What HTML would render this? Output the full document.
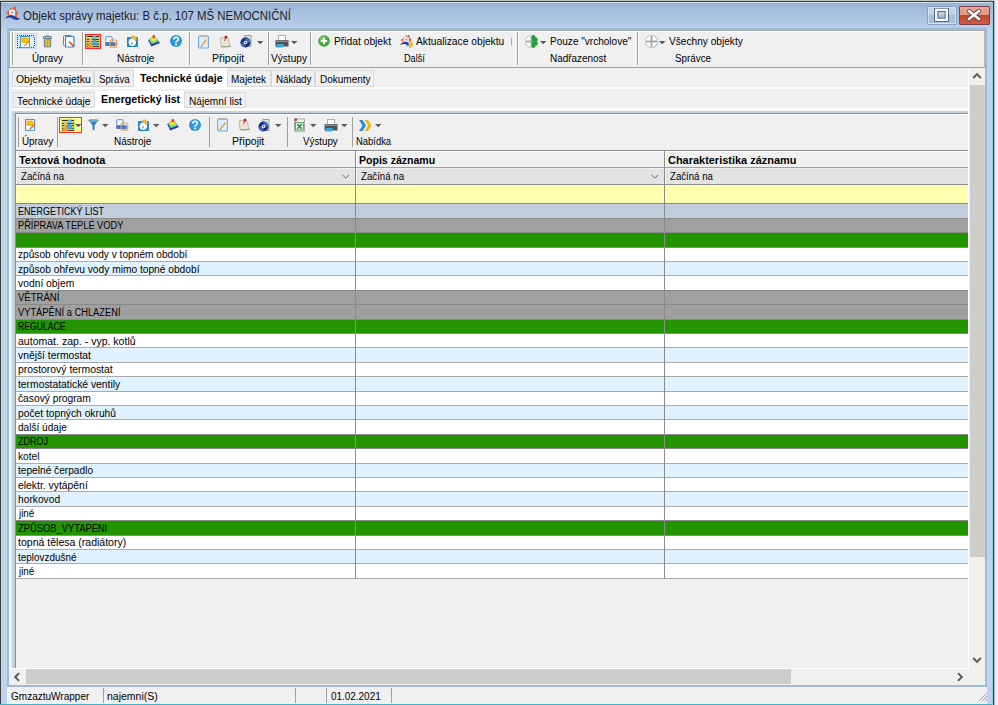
<!DOCTYPE html>
<html><head><meta charset="utf-8">
<style>
html,body{margin:0;padding:0;}
body{width:998px;height:705px;position:relative;overflow:hidden;background:#f0f0f0;font-family:"Liberation Sans", sans-serif;}
div{position:absolute;}
.t{white-space:pre;line-height:normal;}
</style></head><body>
<div style="left:0px;top:0px;width:998px;height:705px;background:#f0f0f0"></div>
<div style="left:0px;top:0px;width:995px;height:1px;background:#c4c4c4"></div>
<div style="left:0px;top:1px;width:994px;height:704px;background:#3a4048"></div>
<div style="left:994px;top:1px;width:1px;height:704px;background:#b4b8bc"></div>
<div style="left:1px;top:2px;width:992px;height:703px;background:#bdd4ec"></div>
<div style="left:1px;top:2px;width:992px;height:26px;background:linear-gradient(#98b3d3,#b9d0ea)"></div>
<div style="left:2px;top:2px;width:990px;height:1px;background:#d4e2f0"></div>
<div style="left:7px;top:28px;width:980px;height:659px;background:#9fb9d6"></div>
<div style="left:9px;top:30px;width:976px;height:655px;background:#f0f0f0"></div>
<div style="left:7px;top:687px;width:980px;height:17px;background:#f0f0f0"></div>
<div style="left:0px;top:704px;width:993px;height:1px;background:#3fb2c6"></div>
<div style="left:992px;top:5px;width:1px;height:700px;background:#8ccde4"></div>
<svg style="position:absolute;left:0px;top:0px" width="24" height="24" viewBox="0 0 24 24">
<path d="M5.3 13.6 L12.4 7.6 L14 8.8 L14 6.8 L16 6.8 L16 10.6 L19 13.6 L17.2 13.6 L17 18 L15 18 L15 10.3 L12.2 9.9 L9.3 10.4 L9 15.5 L7.8 15.5 L7.8 13.6Z" fill="#e45a2a"/>
<path d="M9.2 10.2 L12.3 8.9 L15.2 10.2 L15.2 16 L9.2 16Z" fill="#e6e2ea"/>
<circle cx="12.2" cy="12.4" r="0.8" fill="#7a7a90"/>
<path d="M5.4 18 Q8 15 11 15.1 Q14 15.3 16.5 17.4 Q18 18.2 19.8 17.9 L19.2 19.2 Q17 20.4 14.5 19.6 Q12.5 18 10 17.6 Q7.5 17.5 5.8 18.6Z" fill="#1e3ea0"/>
<path d="M11 18 Q13 18.6 14.6 20.2 L12.6 20.1Z" fill="#50b8c0"/></svg>
<div class="t" style="left:23.40px;top:8.74px;font-size:12px;color:#1e1e28;transform:scaleX(0.9522);transform-origin:0 0;">Objekt správy majetku: B č.p. 107 MŠ NEMOCNIČNÍ</div>
<div style="left:926.5px;top:6px;width:30.5px;height:18.5px;background:linear-gradient(#c6d8ec 0%,#bcd0e8 45%,#a6bdd8 50%,#aac2dc 100%);border:1px solid #8aa2be;box-shadow:inset 0 0 0 1px #d0e0f2;box-sizing:border-box;border-radius:1px"></div>
<svg style="position:absolute;left:934px;top:8px" width="16" height="15" viewBox="0 0 16 15"><rect x="2.2" y="1.8" width="10.6" height="10" fill="none" stroke="#4a5a70" stroke-width="4.2"/><rect x="2.2" y="1.8" width="10.6" height="10" fill="none" stroke="#fafafa" stroke-width="2.4"/></svg>
<div style="left:959px;top:6px;width:31px;height:18.5px;background:linear-gradient(#eba898 0%,#e4927e 45%,#c4462a 50%,#cf5c42 100%);border:1px solid #80404a;box-sizing:border-box;border-radius:1px"></div>
<svg style="position:absolute;left:964px;top:7px" width="20" height="16" viewBox="0 0 20 16"><path d="M5 4 L15 12 M15 4 L5 12" stroke="#5a4048" stroke-width="4.4" stroke-linecap="round"/><path d="M5 4 L15 12 M15 4 L5 12" stroke="#f6f6f6" stroke-width="2.8" stroke-linecap="round"/></svg>
<div style="left:9px;top:30px;width:976px;height:37px;background:#f0f0f0"></div>
<div style="left:9px;top:30px;width:976px;height:1px;background:#a4abb3"></div>
<div style="left:9px;top:30px;width:1px;height:38px;background:#a4abb3"></div>
<div style="left:10px;top:31px;width:974px;height:1px;background:#fff"></div>
<div style="left:10px;top:31px;width:1px;height:36px;background:#fff"></div>
<div style="left:9px;top:67px;width:976px;height:1px;background:#a0a0a0"></div>
<div style="left:984px;top:30px;width:1px;height:38px;background:#b8b8b8"></div>
<div style="left:9px;top:68px;width:1px;height:600px;background:#fafafa"></div>
<div style="left:12px;top:32px;width:1px;height:33px;background:#a0a0a0"></div>
<div style="left:13px;top:32px;width:1px;height:33px;background:#fafafa"></div>
<div style="left:82px;top:32px;width:1px;height:33px;background:#a0a0a0"></div>
<div style="left:83px;top:32px;width:1px;height:33px;background:#fafafa"></div>
<div style="left:189px;top:32px;width:1px;height:33px;background:#a0a0a0"></div>
<div style="left:190px;top:32px;width:1px;height:33px;background:#fafafa"></div>
<div style="left:268px;top:32px;width:1px;height:33px;background:#a0a0a0"></div>
<div style="left:269px;top:32px;width:1px;height:33px;background:#fafafa"></div>
<div style="left:310px;top:32px;width:1px;height:33px;background:#a0a0a0"></div>
<div style="left:311px;top:32px;width:1px;height:33px;background:#fafafa"></div>
<div style="left:517px;top:32px;width:1px;height:33px;background:#a0a0a0"></div>
<div style="left:518px;top:32px;width:1px;height:33px;background:#fafafa"></div>
<div style="left:637px;top:32px;width:1px;height:33px;background:#a0a0a0"></div>
<div style="left:638px;top:32px;width:1px;height:33px;background:#fafafa"></div>
<div style="left:511px;top:38px;width:1px;height:8px;background:#b0b0b0"></div>
<div class="t" style="left:32.00px;top:52.75px;font-size:10px;color:#000;transform:scaleX(0.9787);transform-origin:0 0;">Úpravy</div>
<div class="t" style="left:116.80px;top:52.75px;font-size:10px;color:#000;transform:scaleX(1.0060);transform-origin:0 0;">Nástroje</div>
<div class="t" style="left:212.40px;top:52.75px;font-size:10px;color:#000;transform:scaleX(1.0524);transform-origin:0 0;">Připojit</div>
<div class="t" style="left:271.00px;top:52.75px;font-size:10px;color:#000;transform:scaleX(1.0121);transform-origin:0 0;">Výstupy</div>
<div class="t" style="left:404.00px;top:52.75px;font-size:10px;color:#000;transform:scaleX(0.9128);transform-origin:0 0;">Další</div>
<div class="t" style="left:549.50px;top:52.75px;font-size:10px;color:#000;transform:scaleX(0.9926);transform-origin:0 0;">Nadřazenost</div>
<div class="t" style="left:675.00px;top:52.75px;font-size:10px;color:#000;transform:scaleX(0.9832);transform-origin:0 0;">Správce</div>
<div class="t" style="left:333.50px;top:36.25px;font-size:10px;color:#000;transform:scaleX(1.0267);transform-origin:0 0;">Přidat objekt</div>
<div class="t" style="left:415.50px;top:36.25px;font-size:10px;color:#000;transform:scaleX(1.0245);transform-origin:0 0;">Aktualizace objektu</div>
<div class="t" style="left:549.50px;top:36.25px;font-size:10px;color:#000;transform:scaleX(1.0039);transform-origin:0 0;">Pouze "vrcholove"</div>
<div class="t" style="left:669.00px;top:36.25px;font-size:10px;color:#000;transform:scaleX(1.0135);transform-origin:0 0;">Všechny objekty</div>
<div style="left:9px;top:68px;width:960px;height:20px;background:#f0f0f0"></div>
<div style="left:12px;top:87px;width:957px;height:2px;background:#fff"></div>
<div style="left:11.5px;top:70px;width:82.5px;height:17px;background:#f0f0f0;border:1px solid #dadada;box-sizing:border-box"></div>
<div class="t" style="left:15.50px;top:73.95px;font-size:10px;color:#000;transform:scaleX(1.0431);transform-origin:0 0;">Objekty majetku</div>
<div style="left:93.5px;top:70px;width:40.5px;height:17px;background:#f0f0f0;border:1px solid #dadada;box-sizing:border-box"></div>
<div class="t" style="left:99.00px;top:73.95px;font-size:10px;color:#000;transform:scaleX(0.9650);transform-origin:0 0;">Správa</div>
<div style="left:226.5px;top:70px;width:44.5px;height:17px;background:#f0f0f0;border:1px solid #dadada;box-sizing:border-box"></div>
<div class="t" style="left:231.00px;top:73.95px;font-size:10px;color:#000;transform:scaleX(0.9996);transform-origin:0 0;">Majetek</div>
<div style="left:270.5px;top:70px;width:44.5px;height:17px;background:#f0f0f0;border:1px solid #dadada;box-sizing:border-box"></div>
<div class="t" style="left:275.50px;top:73.95px;font-size:10px;color:#000;transform:scaleX(0.9826);transform-origin:0 0;">Náklady</div>
<div style="left:314.5px;top:70px;width:59.0px;height:17px;background:#f0f0f0;border:1px solid #dadada;box-sizing:border-box"></div>
<div class="t" style="left:319.50px;top:73.95px;font-size:10px;color:#000;transform:scaleX(0.9985);transform-origin:0 0;">Dokumenty</div>
<div style="left:134px;top:68px;width:92.5px;height:21px;background:#fff"></div>
<div class="t" style="left:139.50px;top:71.75px;font-size:11px;font-weight:bold;color:#000;transform:scaleX(0.9746);transform-origin:0 0;">Technické údaje</div>
<div style="left:12.5px;top:91.5px;width:82.5px;height:16.5px;background:#f0f0f0;border:1px solid #dadada;box-sizing:border-box"></div>
<div class="t" style="left:17.40px;top:95.65px;font-size:10px;color:#000;transform:scaleX(1.0256);transform-origin:0 0;">Technické údaje</div>
<div style="left:184px;top:91.5px;width:61.5px;height:16.5px;background:#f0f0f0;border:1px solid #dadada;box-sizing:border-box"></div>
<div class="t" style="left:189.00px;top:95.65px;font-size:10px;color:#000;transform:scaleX(1.0103);transform-origin:0 0;">Nájemní list</div>
<div style="left:12px;top:108px;width:957px;height:3px;background:#fff"></div>
<div style="left:95px;top:90.5px;width:89px;height:19.5px;background:#fff"></div>
<div class="t" style="left:100.50px;top:93.05px;font-size:11px;font-weight:bold;color:#000;transform:scaleX(0.9737);transform-origin:0 0;">Energetický list</div>
<div style="left:12px;top:111px;width:957px;height:557px;background:#c3d1de"></div>
<div style="left:15px;top:113px;width:954px;height:555px;background:#f0f0f0"></div>
<div style="left:15px;top:113px;width:954px;height:1px;background:#8c8c8c"></div>
<div style="left:15px;top:113px;width:1px;height:555px;background:#8c8c8c"></div>
<div style="left:968px;top:578px;width:1px;height:90px;background:#fff"></div>
<div style="left:16px;top:114px;width:953px;height:36px;background:#f0f0f0"></div>
<div style="left:16px;top:114px;width:953px;height:1px;background:#fff"></div>
<div style="left:17.5px;top:117px;width:1px;height:30px;background:#a0a0a0"></div>
<div style="left:56.6px;top:117px;width:1px;height:30px;background:#a0a0a0"></div>
<div style="left:208.8px;top:117px;width:1px;height:30px;background:#a0a0a0"></div>
<div style="left:287.2px;top:117px;width:1px;height:30px;background:#a0a0a0"></div>
<div style="left:352px;top:117px;width:1px;height:30px;background:#a0a0a0"></div>
<div class="t" style="left:21.60px;top:135.95px;font-size:10px;color:#000;transform:scaleX(0.9819);transform-origin:0 0;">Úpravy</div>
<div class="t" style="left:113.60px;top:135.95px;font-size:10px;color:#000;transform:scaleX(1.0007);transform-origin:0 0;">Nástroje</div>
<div class="t" style="left:231.60px;top:135.95px;font-size:10px;color:#000;transform:scaleX(1.0556);transform-origin:0 0;">Připojit</div>
<div class="t" style="left:302.60px;top:135.95px;font-size:10px;color:#000;transform:scaleX(0.9755);transform-origin:0 0;">Výstupy</div>
<div class="t" style="left:355.90px;top:135.95px;font-size:10px;color:#000;transform:scaleX(0.9420);transform-origin:0 0;">Nabídka</div>
<div style="left:15px;top:150px;width:954px;height:1px;background:#8c8c8c"></div>
<div style="left:16px;top:151px;width:953px;height:17px;background:#f0f0f0"></div>
<div style="left:16px;top:167px;width:953px;height:1px;background:#a0a0a0"></div>
<div style="left:16px;top:168px;width:953px;height:17px;background:#e3e3e3"></div>
<div style="left:16px;top:184px;width:953px;height:1px;background:#8c8c8c"></div>
<div style="left:16px;top:185px;width:953px;height:18px;background:#ffffb0"></div>
<div style="left:16px;top:151px;width:1px;height:16px;background:#fff"></div>
<div style="left:16px;top:168px;width:1px;height:16px;background:#f4f4f4"></div>
<div style="left:356px;top:151px;width:1px;height:16px;background:#fff"></div>
<div style="left:356px;top:168px;width:1px;height:16px;background:#f4f4f4"></div>
<div style="left:665px;top:151px;width:1px;height:16px;background:#fff"></div>
<div style="left:665px;top:168px;width:1px;height:16px;background:#f4f4f4"></div>
<div style="left:16px;top:151px;width:953px;height:1px;background:#fff"></div>
<div style="left:16px;top:168px;width:953px;height:1px;background:#f0f0f0"></div>
<div class="t" style="left:18.50px;top:153.54px;font-size:11px;font-weight:bold;color:#000;transform:scaleX(0.9901);transform-origin:0 0;">Textová hodnota</div>
<div class="t" style="left:358.50px;top:153.54px;font-size:11px;font-weight:bold;color:#000;transform:scaleX(0.9588);transform-origin:0 0;">Popis záznamu</div>
<div class="t" style="left:667.70px;top:153.54px;font-size:11px;font-weight:bold;color:#000;transform:scaleX(0.9955);transform-origin:0 0;">Charakteristika záznamu</div>
<div class="t" style="left:20.50px;top:170.95px;font-size:10px;color:#000;transform:scaleX(0.9686);transform-origin:0 0;">Začíná na</div>
<div class="t" style="left:360.60px;top:170.95px;font-size:10px;color:#000;transform:scaleX(0.9686);transform-origin:0 0;">Začíná na</div>
<div class="t" style="left:670.40px;top:170.95px;font-size:10px;color:#000;transform:scaleX(0.9641);transform-origin:0 0;">Začíná na</div>
<svg style="position:absolute;left:342.0px;top:174px" width="8" height="6" viewBox="0 0 8 6"><path d="M0.6 1 L3.8 4.2 L7 1" fill="none" stroke="#6a6a6a" stroke-width="1"/></svg>
<svg style="position:absolute;left:651.0px;top:174px" width="8" height="6" viewBox="0 0 8 6"><path d="M0.6 1 L3.8 4.2 L7 1" fill="none" stroke="#6a6a6a" stroke-width="1"/></svg>
<div style="left:16px;top:204px;width:953px;height:14px;background:#c0cedb"></div>
<div style="left:16px;top:219px;width:953px;height:13px;background:#a0a0a0"></div>
<div style="left:16px;top:233px;width:953px;height:14px;background:#229500"></div>
<div style="left:16px;top:248px;width:953px;height:13px;background:#ffffff"></div>
<div style="left:16px;top:262px;width:953px;height:13px;background:#e0f2fd"></div>
<div style="left:16px;top:276px;width:953px;height:14px;background:#ffffff"></div>
<div style="left:16px;top:291px;width:953px;height:13px;background:#a0a0a0"></div>
<div style="left:16px;top:305px;width:953px;height:14px;background:#a0a0a0"></div>
<div style="left:16px;top:320px;width:953px;height:13px;background:#229500"></div>
<div style="left:16px;top:334px;width:953px;height:13px;background:#ffffff"></div>
<div style="left:16px;top:348px;width:953px;height:14px;background:#e0f2fd"></div>
<div style="left:16px;top:363px;width:953px;height:13px;background:#ffffff"></div>
<div style="left:16px;top:377px;width:953px;height:14px;background:#e0f2fd"></div>
<div style="left:16px;top:392px;width:953px;height:13px;background:#ffffff"></div>
<div style="left:16px;top:406px;width:953px;height:13px;background:#e0f2fd"></div>
<div style="left:16px;top:420px;width:953px;height:14px;background:#ffffff"></div>
<div style="left:16px;top:435px;width:953px;height:13px;background:#229500"></div>
<div style="left:16px;top:449px;width:953px;height:14px;background:#ffffff"></div>
<div style="left:16px;top:464px;width:953px;height:13px;background:#e0f2fd"></div>
<div style="left:16px;top:478px;width:953px;height:13px;background:#ffffff"></div>
<div style="left:16px;top:492px;width:953px;height:14px;background:#e0f2fd"></div>
<div style="left:16px;top:507px;width:953px;height:13px;background:#ffffff"></div>
<div style="left:16px;top:521px;width:953px;height:14px;background:#229500"></div>
<div style="left:16px;top:536px;width:953px;height:13px;background:#ffffff"></div>
<div style="left:16px;top:550px;width:953px;height:13px;background:#e0f2fd"></div>
<div style="left:16px;top:564px;width:953px;height:14px;background:#ffffff"></div>
<div style="left:16px;top:203px;width:953px;height:1px;background:#8a8a8a"></div>
<div style="left:16px;top:218px;width:953px;height:1px;background:#8a8a8a"></div>
<div style="left:16px;top:232px;width:953px;height:1px;background:#8a8a8a"></div>
<div style="left:16px;top:247px;width:953px;height:1px;background:#8a8a8a"></div>
<div style="left:16px;top:261px;width:953px;height:1px;background:#acacac"></div>
<div style="left:16px;top:275px;width:953px;height:1px;background:#acacac"></div>
<div style="left:16px;top:290px;width:953px;height:1px;background:#8a8a8a"></div>
<div style="left:16px;top:304px;width:953px;height:1px;background:#8a8a8a"></div>
<div style="left:16px;top:319px;width:953px;height:1px;background:#8a8a8a"></div>
<div style="left:16px;top:333px;width:953px;height:1px;background:#8a8a8a"></div>
<div style="left:16px;top:347px;width:953px;height:1px;background:#acacac"></div>
<div style="left:16px;top:362px;width:953px;height:1px;background:#acacac"></div>
<div style="left:16px;top:376px;width:953px;height:1px;background:#acacac"></div>
<div style="left:16px;top:391px;width:953px;height:1px;background:#acacac"></div>
<div style="left:16px;top:405px;width:953px;height:1px;background:#acacac"></div>
<div style="left:16px;top:419px;width:953px;height:1px;background:#acacac"></div>
<div style="left:16px;top:434px;width:953px;height:1px;background:#8a8a8a"></div>
<div style="left:16px;top:448px;width:953px;height:1px;background:#8a8a8a"></div>
<div style="left:16px;top:463px;width:953px;height:1px;background:#acacac"></div>
<div style="left:16px;top:477px;width:953px;height:1px;background:#acacac"></div>
<div style="left:16px;top:491px;width:953px;height:1px;background:#acacac"></div>
<div style="left:16px;top:506px;width:953px;height:1px;background:#acacac"></div>
<div style="left:16px;top:520px;width:953px;height:1px;background:#8a8a8a"></div>
<div style="left:16px;top:535px;width:953px;height:1px;background:#8a8a8a"></div>
<div style="left:16px;top:549px;width:953px;height:1px;background:#acacac"></div>
<div style="left:16px;top:563px;width:953px;height:1px;background:#acacac"></div>
<div style="left:16px;top:578px;width:953px;height:1px;background:#acacac"></div>
<div class="t" style="left:18.30px;top:205.95px;font-size:10px;color:#000;transform:scaleX(0.9008);transform-origin:0 0;">ENERGETICKÝ LIST</div>
<div class="t" style="left:18.30px;top:219.95px;font-size:10px;color:#000;transform:scaleX(0.9244);transform-origin:0 0;">PŘÍPRAVA TEPLÉ VODY</div>
<div class="t" style="left:18.30px;top:248.95px;font-size:10px;color:#000;transform:scaleX(1.0156);transform-origin:0 0;">způsob ohřevu vody v topném období</div>
<div class="t" style="left:18.30px;top:263.95px;font-size:10px;color:#000;transform:scaleX(1.0201);transform-origin:0 0;">způsob ohřevu vody mimo topné období</div>
<div class="t" style="left:18.30px;top:277.95px;font-size:10px;color:#000;transform:scaleX(1.0324);transform-origin:0 0;">vodní objem</div>
<div class="t" style="left:18.30px;top:291.95px;font-size:10px;color:#000;transform:scaleX(0.9550);transform-origin:0 0;">VĚTRÁNÍ</div>
<div class="t" style="left:18.30px;top:306.95px;font-size:10px;color:#000;transform:scaleX(0.9315);transform-origin:0 0;">VYTÁPĚNÍ a CHLAZENÍ</div>
<div class="t" style="left:18.30px;top:320.95px;font-size:10px;color:#000;transform:scaleX(0.8619);transform-origin:0 0;">REGULACE</div>
<div class="t" style="left:18.30px;top:335.95px;font-size:10px;color:#000;transform:scaleX(1.0526);transform-origin:0 0;">automat. zap. - vyp. kotlů</div>
<div class="t" style="left:18.30px;top:349.95px;font-size:10px;color:#000;transform:scaleX(1.0324);transform-origin:0 0;">vnější termostat</div>
<div class="t" style="left:18.30px;top:363.95px;font-size:10px;color:#000;transform:scaleX(1.0387);transform-origin:0 0;">prostorový termostat</div>
<div class="t" style="left:18.30px;top:378.95px;font-size:10px;color:#000;transform:scaleX(1.0331);transform-origin:0 0;">termostatatické ventily</div>
<div class="t" style="left:18.30px;top:392.95px;font-size:10px;color:#000;transform:scaleX(1.0239);transform-origin:0 0;">časový program</div>
<div class="t" style="left:18.30px;top:407.95px;font-size:10px;color:#000;transform:scaleX(1.0246);transform-origin:0 0;">počet topných okruhů</div>
<div class="t" style="left:18.30px;top:421.95px;font-size:10px;color:#000;transform:scaleX(1.0080);transform-origin:0 0;">další údaje</div>
<div class="t" style="left:18.30px;top:435.95px;font-size:10px;color:#000;transform:scaleX(0.8971);transform-origin:0 0;">ZDROJ</div>
<div class="t" style="left:18.30px;top:450.95px;font-size:10px;color:#000;transform:scaleX(1.0191);transform-origin:0 0;">kotel</div>
<div class="t" style="left:18.30px;top:464.95px;font-size:10px;color:#000;transform:scaleX(1.0150);transform-origin:0 0;">tepelné čerpadlo</div>
<div class="t" style="left:18.30px;top:479.95px;font-size:10px;color:#000;transform:scaleX(1.0373);transform-origin:0 0;">elektr. vytápění</div>
<div class="t" style="left:18.30px;top:493.95px;font-size:10px;color:#000;transform:scaleX(1.0228);transform-origin:0 0;">horkovod</div>
<div class="t" style="left:19.28px;top:507.95px;font-size:10px;color:#000;transform:scaleX(0.9762);transform-origin:0 0;">jiné</div>
<div class="t" style="left:18.30px;top:522.95px;font-size:10px;color:#000;transform:scaleX(0.9353);transform-origin:0 0;">ZPŮSOB_VYTAPENI</div>
<div class="t" style="left:18.30px;top:536.95px;font-size:10px;color:#000;transform:scaleX(1.0527);transform-origin:0 0;">topná tělesa (radiátory)</div>
<div class="t" style="left:18.30px;top:551.95px;font-size:10px;color:#000;transform:scaleX(0.9921);transform-origin:0 0;">teplovzdušné</div>
<div class="t" style="left:19.28px;top:565.95px;font-size:10px;color:#000;transform:scaleX(0.9762);transform-origin:0 0;">jiné</div>
<div style="left:355px;top:151px;width:1px;height:428px;background:#8c8c8c"></div>
<div style="left:664px;top:151px;width:1px;height:428px;background:#8c8c8c"></div>
<div style="left:969px;top:68px;width:16px;height:600px;background:#f0f0f0"></div>
<div style="left:968px;top:68px;width:1px;height:600px;background:#ffffff"></div>
<div style="left:969.5px;top:84.5px;width:15px;height:472.5px;background:#cdcdcd"></div>
<svg style="position:absolute;left:972px;top:72px" width="10" height="8" viewBox="0 0 10 8"><path d="M1.2 6 L5 2.2 L8.8 6" fill="none" stroke="#555" stroke-width="1.9"/></svg>
<svg style="position:absolute;left:972px;top:656px" width="10" height="8" viewBox="0 0 10 8"><path d="M1.2 2 L5 5.8 L8.8 2" fill="none" stroke="#555" stroke-width="1.9"/></svg>
<div style="left:9px;top:668px;width:960px;height:1px;background:#fff"></div>
<div style="left:9px;top:669px;width:960px;height:16px;background:#f0f0f0"></div>
<div style="left:26px;top:669px;width:765px;height:15px;background:#cdcdcd"></div>
<svg style="position:absolute;left:13px;top:672px" width="8" height="10" viewBox="0 0 8 10"><path d="M6 1.2 L2.2 5 L6 8.8" fill="none" stroke="#555" stroke-width="1.9"/></svg>
<svg style="position:absolute;left:956px;top:672px" width="8" height="10" viewBox="0 0 8 10"><path d="M2 1.2 L5.8 5 L2 8.8" fill="none" stroke="#555" stroke-width="1.9"/></svg>
<div style="left:15px;top:33px;width:21.5px;height:15.8px;background:#d9e9f8;border:1px solid #c6ddf3;box-sizing:border-box"></div>
<svg style="position:absolute;left:17px;top:35px" width="18" height="13" viewBox="0 0 18 13"><rect x="0" y="0" width="1" height="1" fill="#444"/><rect x="0" y="12" width="1" height="1" fill="#444"/><rect x="2" y="0" width="1" height="1" fill="#444"/><rect x="2" y="12" width="1" height="1" fill="#444"/><rect x="4" y="0" width="1" height="1" fill="#444"/><rect x="4" y="12" width="1" height="1" fill="#444"/><rect x="6" y="0" width="1" height="1" fill="#444"/><rect x="6" y="12" width="1" height="1" fill="#444"/><rect x="8" y="0" width="1" height="1" fill="#444"/><rect x="8" y="12" width="1" height="1" fill="#444"/><rect x="10" y="0" width="1" height="1" fill="#444"/><rect x="10" y="12" width="1" height="1" fill="#444"/><rect x="12" y="0" width="1" height="1" fill="#444"/><rect x="12" y="12" width="1" height="1" fill="#444"/><rect x="14" y="0" width="1" height="1" fill="#444"/><rect x="14" y="12" width="1" height="1" fill="#444"/><rect x="16" y="0" width="1" height="1" fill="#444"/><rect x="16" y="12" width="1" height="1" fill="#444"/><rect x="0" y="2" width="1" height="1" fill="#444"/><rect x="17" y="2" width="1" height="1" fill="#444"/><rect x="0" y="4" width="1" height="1" fill="#444"/><rect x="17" y="4" width="1" height="1" fill="#444"/><rect x="0" y="6" width="1" height="1" fill="#444"/><rect x="17" y="6" width="1" height="1" fill="#444"/><rect x="0" y="8" width="1" height="1" fill="#444"/><rect x="17" y="8" width="1" height="1" fill="#444"/><rect x="0" y="10" width="1" height="1" fill="#444"/><rect x="17" y="10" width="1" height="1" fill="#444"/><rect x="13" y="2" width="3" height="9" fill="#e4eef8"/>
<rect x="3.5" y="1.5" width="9" height="11" fill="#fff" stroke="#4a9ad8" stroke-width="1"/>
<path d="M4.2 2.2 H10 L11.8 4 V8 H4.2Z" fill="#f7bb10"/>
<path d="M7 10.5 L11.5 6 L12.2 6.8 L7.7 11.2Z" fill="#e56a20"/></svg>
<svg style="position:absolute;left:42.5px;top:35px" width="10" height="13" viewBox="0 0 10 13"><rect x="0.5" y="1.5" width="8" height="2.2" rx="0.6" fill="#e8b428" stroke="#5a7ea6" stroke-width="1"/>
<rect x="3" y="0.2" width="3" height="1.5" fill="#7a9ac0"/>
<rect x="1.3" y="3.8" width="6.4" height="8" rx="0.8" fill="#e8b428" stroke="#5a7ea6" stroke-width="1"/>
<path d="M4.5 4.5 V11" stroke="#c89a20" stroke-width="0.6"/></svg>
<svg style="position:absolute;left:62.5px;top:35px" width="12" height="13" viewBox="0 0 12 13"><rect x="0.5" y="0.5" width="8" height="10" rx="0.8" fill="#fff" stroke="#4a90c8" stroke-width="1"/>
<rect x="2.5" y="1.5" width="8.5" height="10.5" rx="0.8" fill="#fff" stroke="#3a86c4" stroke-width="1.2"/>
<path d="M6 6.5 L10.5 11.2" stroke="#e05a20" stroke-width="1.8"/></svg>
<svg style="position:absolute;left:85px;top:34px" width="16" height="15" viewBox="0 0 16 15"><rect x="0.6" y="0.6" width="14.8" height="13.8" fill="#d4dc68" stroke="#ff2a20" stroke-width="1.2"/><path d="M2 2.5 H14 M2 5.4 H14 M2 7.6 H14 M2 10.3 H14 M2 12.4 H14" stroke="#1a1a1a" stroke-width="0.9"/>
<path d="M2.6 13.6 C2.6 10.6 3.8 8.6 5.5 8.1 C7.2 8.6 8.4 10.6 8.4 13.6Z" fill="#f39a30"/>
<circle cx="5.5" cy="6.4" r="1.8" fill="#f4b07a"/>
<path d="M6.8 10.8 C6.8 7.8 8 5.8 9.6 5.2 C11.2 5.8 12.3 7.8 12.3 10.8Z" fill="#45a8e0"/>
<circle cx="9.6" cy="3.2" r="1.9" fill="#62bcec"/></svg>
<svg style="position:absolute;left:104.5px;top:35.5px" width="13" height="12" viewBox="0 0 13 12"><rect x="0.7" y="0.7" width="6.5" height="6" rx="0.8" fill="#f4f8fc" stroke="#5a98dc" stroke-width="1"/>
<rect x="0.2" y="6.3" width="10.5" height="3.8" rx="1" fill="#4a74c0"/>
<rect x="5.1" y="4" width="6.6" height="7.2" rx="1" fill="none" stroke="#e0a060" stroke-width="1.2"/></svg>
<svg style="position:absolute;left:127px;top:35px" width="12" height="13" viewBox="0 0 12 13"><rect x="0" y="2" width="11" height="10" rx="1" fill="#1e88c8"/>
<circle cx="5.3" cy="7.3" r="3.7" fill="#fff"/>
<path d="M5.3 7.3 L4.5 9.5" stroke="#234" stroke-width="0.8"/>
<path d="M3.5 2.5 L6 0 L9 2 L10 5 L7.5 6 L6 3.5Z" fill="#f5b820"/></svg>
<svg style="position:absolute;left:145px;top:33px" width="18" height="16" viewBox="0 0 18 16"><path d="M9 2.5 L15 10 L6.2 13.5 L3.2 7.2Z" fill="#3232a8"/>
<path d="M9 2.5 L13.4 8.8 L6.4 11.3 L4 6.7Z" fill="#2ec4ee"/>
<path d="M9 2.5 L12.9 8.2 L6.8 10.2 L4.6 6.3Z" fill="#9ae050"/>
<path d="M9 2.5 L11.8 6.8 L7.4 8.3 L5.6 5.6Z" fill="#eef030"/>
<path d="M9 2.5 L10.8 5.3 L8.2 6.2 L7 4.6Z" fill="#f8a028"/>
<circle cx="8.8" cy="3.4" r="1.3" fill="#e83828"/></svg>
<svg style="position:absolute;left:170px;top:35px" width="12" height="12" viewBox="0 0 12 12"><circle cx="6" cy="6" r="6" fill="#2a9ad8"/>
<path d="M3.8 4.5 Q3.8 2.2 6 2.2 Q8.3 2.2 8.3 4.3 Q8.3 5.5 6.8 6.2 Q6 6.6 6 7.8" fill="none" stroke="#fff" stroke-width="1.6"/>
<rect x="5.1" y="8.6" width="1.8" height="1.7" fill="#fff"/></svg>
<svg style="position:absolute;left:197.5px;top:34.5px" width="12" height="14" viewBox="0 0 12 14"><rect x="0.6" y="1" width="9.8" height="12" rx="1" fill="#dceefb" stroke="#74a8dc" stroke-width="1.1"/>
<path d="M2 1 H9" stroke="#c8a060" stroke-width="1"/>
<path d="M3 10.5 L8 4 L9 5 L4 11.5Z" fill="#f0a020"/>
<path d="M3 10.5 L2.8 12 L4 11.5Z" fill="#444"/></svg>
<svg style="position:absolute;left:218.5px;top:34.5px" width="13" height="14" viewBox="0 0 13 14"><path d="M1 3 Q3 2 9 3 L11 11 Q8 12.5 2 11.5Z" fill="#ece4d2" stroke="#b0a890" stroke-width="0.7"/>
<path d="M2 11.5 L4 12 L11.5 11.5 L11 10.5" fill="none" stroke="#888" stroke-width="0.8"/>
<circle cx="7" cy="2" r="1.6" fill="#d02828"/>
<path d="M7 2 L5.5 6" stroke="#901818" stroke-width="0.8"/></svg>
<svg style="position:absolute;left:240px;top:35px" width="12" height="13" viewBox="0 0 12 13"><rect x="5" y="0.5" width="6" height="11" fill="#e4e4e4" stroke="#8a8a8a" stroke-width="0.8"/>
<circle cx="5.5" cy="7.5" r="5" fill="#1c2a78"/>
<path d="M5.5 2.5 A5 5 0 0 1 10.5 7.5 L5.5 7.5Z" fill="#3a70d0"/>
<path d="M5.5 12.5 A5 5 0 0 1 0.5 7.5 L5.5 7.5Z" fill="#4060c0"/>
<circle cx="5.5" cy="7.5" r="1.8" fill="#f0f0f0"/>
<circle cx="5.5" cy="7.5" r="0.7" fill="#333"/></svg>
<svg style="position:absolute;left:256.5px;top:40.5px" width="7" height="4" viewBox="0 0 7 4"><path d="M0 0 H6.5 L3.25 3.2Z" fill="#5a5a5a"/></svg>
<svg style="position:absolute;left:274.5px;top:35px" width="14" height="13" viewBox="0 0 14 13"><rect x="3.5" y="0.5" width="7" height="5" fill="#fff" stroke="#9a9a9a" stroke-width="0.8"/>
<path d="M0.5 5 H13.5 V11.5 H0.5Z" fill="#505458"/>
<path d="M1 5.5 H13 V7 H1Z" fill="#8a8e92"/>
<path d="M2 9 L9 9 L8 12.5 L1 12.5Z" fill="#38a8e0"/></svg>
<svg style="position:absolute;left:290.5px;top:40.5px" width="7" height="4" viewBox="0 0 7 4"><path d="M0 0 H6.5 L3.25 3.2Z" fill="#5a5a5a"/></svg>
<svg style="position:absolute;left:318px;top:35.2px" width="12" height="12" viewBox="0 0 12 12"><defs><radialGradient id="gp" cx="0.35" cy="0.3" r="0.7"><stop offset="0" stop-color="#a8e088" stop-opacity="0.8"/><stop offset="1" stop-color="#2a9a30" stop-opacity="0"/></radialGradient></defs><circle cx="6" cy="6" r="5.8" fill="#3aa838"/>
<circle cx="6" cy="6" r="5.8" fill="url(#gp)"/>
<path d="M6 2.8 V9.2 M2.8 6 H9.2" stroke="#fff" stroke-width="2"/></svg>
<svg style="position:absolute;left:399.5px;top:34.5px" width="14" height="14" viewBox="0 0 14 14"><g transform="translate(0.2 -0.5) scale(0.88) translate(-5.3 -6.8)"><path d="M5.3 13.6 L12.4 7.6 L14 8.8 L14 6.8 L16 6.8 L16 10.6 L19 13.6 L17.2 13.6 L17 18 L15 18 L15 10.3 L12.2 9.9 L9.3 10.4 L9 15.5 L7.8 15.5 L7.8 13.6Z" fill="#e45a2a"/>
<path d="M9.2 10.2 L12.3 8.9 L15.2 10.2 L15.2 16 L9.2 16Z" fill="#e6e2ea"/>
<circle cx="12.2" cy="12.4" r="0.8" fill="#7a7a90"/>
<path d="M5.4 18 Q8 15 11 15.1 Q14 15.3 16.5 17.4 Q18 18.2 19.8 17.9 L19.2 19.2 Q17 20.4 14.5 19.6 Q12.5 18 10 17.6 Q7.5 17.5 5.8 18.6Z" fill="#1e3ea0"/>
<path d="M11 18 Q13 18.6 14.6 20.2 L12.6 20.1Z" fill="#50b8c0"/></g>
<rect x="8.6" y="6.6" width="5" height="6.6" fill="#cfe6f8"/>
<path d="M9.2 7.2 H11.8 L13 9 L11.2 12.6 H9.2Z" fill="#f8c010"/></svg>
<svg style="position:absolute;left:524.5px;top:35px" width="13" height="13" viewBox="0 0 13 13"><path d="M6.5 0.5 V12.5 M0.5 6.5 H12.5" stroke="#b0b0b0" stroke-width="1"/><path d="M5.9 5.9 H1.6 Q0.4 5.9 0.6 4.4 Q0.9 2.6 2.6 2.4 Q2.8 0.7 4.5 0.5 Q5.9 0.4 5.9 1.6Z M5.9 7.1 H1.6 Q0.4 7.1 0.6 8.6 Q0.9 10.4 2.6 10.6 Q2.8 12.3 4.5 12.5 Q5.9 12.6 5.9 11.4Z" fill="#fff" stroke="#a8a8a8" stroke-width="0.7"/><path d="M7.1 5.9 H11.4 Q12.6 5.9 12.4 4.4 Q12.1 2.6 10.4 2.4 Q10.2 0.7 8.5 0.5 Q7.1 0.4 7.1 1.6Z M7.1 7.1 H11.4 Q12.6 7.1 12.4 8.6 Q12.1 10.4 10.4 10.6 Q10.2 12.3 8.5 12.5 Q7.1 12.6 7.1 11.4Z" fill="#22a03a" stroke="#1e8a34" stroke-width="0.7"/></svg>
<svg style="position:absolute;left:540px;top:40.5px" width="7" height="4" viewBox="0 0 7 4"><path d="M0 0 H6.5 L3.25 3.2Z" fill="#5a5a5a"/></svg>
<svg style="position:absolute;left:644.5px;top:35px" width="13" height="13" viewBox="0 0 13 13"><path d="M6.5 0.5 V12.5 M0.5 6.5 H12.5" stroke="#b0b0b0" stroke-width="1"/><path d="M5.9 5.9 H1.6 Q0.4 5.9 0.6 4.4 Q0.9 2.6 2.6 2.4 Q2.8 0.7 4.5 0.5 Q5.9 0.4 5.9 1.6Z M5.9 7.1 H1.6 Q0.4 7.1 0.6 8.6 Q0.9 10.4 2.6 10.6 Q2.8 12.3 4.5 12.5 Q5.9 12.6 5.9 11.4Z" fill="#fff" stroke="#a8a8a8" stroke-width="0.7"/><path d="M7.1 5.9 H11.4 Q12.6 5.9 12.4 4.4 Q12.1 2.6 10.4 2.4 Q10.2 0.7 8.5 0.5 Q7.1 0.4 7.1 1.6Z M7.1 7.1 H11.4 Q12.6 7.1 12.4 8.6 Q12.1 10.4 10.4 10.6 Q10.2 12.3 8.5 12.5 Q7.1 12.6 7.1 11.4Z" fill="#ffffff" stroke="#9a9a9a" stroke-width="0.7"/></svg>
<svg style="position:absolute;left:659px;top:40.5px" width="7" height="4" viewBox="0 0 7 4"><path d="M0 0 H6.5 L3.25 3.2Z" fill="#5a5a5a"/></svg>
<svg style="position:absolute;left:25px;top:118.5px" width="11" height="13" viewBox="0 0 11 13"><rect x="0.5" y="0.5" width="9" height="11" rx="1" fill="#fff" stroke="#4a9ad6" stroke-width="1.2"/>
<path d="M1.5 1.5 H7 L8.5 3 V7 H1.5Z" fill="#f7bb10"/>
<path d="M4 10 L9.5 4.5 L10.5 5.5 L5 11Z" fill="#e56a20"/></svg>
<div style="left:59px;top:117px;width:23px;height:15.5px;background:#ffff90;border:1.5px solid #ff3020;box-sizing:border-box"></div>
<svg style="position:absolute;left:60.5px;top:118.5px" width="14" height="13" viewBox="0 0 14 13"><svg x="-1" y="-1" width="16" height="15"><rect x="0" y="0" width="16" height="15" fill="#dce46c"/><path d="M2 2.5 H14 M2 5.4 H14 M2 7.6 H14 M2 10.3 H14 M2 12.4 H14" stroke="#1a1a1a" stroke-width="0.9"/>
<path d="M2.6 13.6 C2.6 10.6 3.8 8.6 5.5 8.1 C7.2 8.6 8.4 10.6 8.4 13.6Z" fill="#f39a30"/>
<circle cx="5.5" cy="6.4" r="1.8" fill="#f4b07a"/>
<path d="M6.8 10.8 C6.8 7.8 8 5.8 9.6 5.2 C11.2 5.8 12.3 7.8 12.3 10.8Z" fill="#45a8e0"/>
<circle cx="9.6" cy="3.2" r="1.9" fill="#62bcec"/></svg></svg>
<svg style="position:absolute;left:75px;top:124px" width="7" height="4" viewBox="0 0 7 4"><path d="M0 0 H6.5 L3.25 3.2Z" fill="#5a5a5a"/></svg>
<svg style="position:absolute;left:88px;top:118.5px" width="11" height="12" viewBox="0 0 11 12"><path d="M0.5 1 H10.5 L6.5 6.5 V11.5 L4.5 10.5 V6.5Z" fill="#2a7ec0"/>
<ellipse cx="5.5" cy="1.6" rx="5" ry="1.3" fill="#5ab0e0" stroke="#c8a030" stroke-width="0.8"/></svg>
<svg style="position:absolute;left:101.5px;top:124px" width="7" height="4" viewBox="0 0 7 4"><path d="M0 0 H6.5 L3.25 3.2Z" fill="#5a5a5a"/></svg>
<svg style="position:absolute;left:116px;top:119px" width="13" height="12" viewBox="0 0 13 12"><rect x="0.7" y="0.7" width="6.5" height="6" rx="0.8" fill="#f4f8fc" stroke="#5a98dc" stroke-width="1"/>
<rect x="0.2" y="6.3" width="10.5" height="3.8" rx="1" fill="#4a74c0"/>
<rect x="5.1" y="4" width="6.6" height="7.2" rx="1" fill="none" stroke="#e0a060" stroke-width="1.2"/></svg>
<svg style="position:absolute;left:138px;top:118.5px" width="12" height="13" viewBox="0 0 12 13"><rect x="0" y="2" width="11" height="10" rx="1" fill="#1e88c8"/>
<circle cx="5.3" cy="7.3" r="3.7" fill="#fff"/>
<path d="M5.3 7.3 L4.5 9.5" stroke="#234" stroke-width="0.8"/>
<path d="M3.5 2.5 L6 0 L9 2 L10 5 L7.5 6 L6 3.5Z" fill="#f5b820"/></svg>
<svg style="position:absolute;left:152.5px;top:124px" width="7" height="4" viewBox="0 0 7 4"><path d="M0 0 H6.5 L3.25 3.2Z" fill="#5a5a5a"/></svg>
<svg style="position:absolute;left:164px;top:116.5px" width="18" height="16" viewBox="0 0 18 16"><path d="M9 2.5 L15 10 L6.2 13.5 L3.2 7.2Z" fill="#3232a8"/>
<path d="M9 2.5 L13.4 8.8 L6.4 11.3 L4 6.7Z" fill="#2ec4ee"/>
<path d="M9 2.5 L12.9 8.2 L6.8 10.2 L4.6 6.3Z" fill="#9ae050"/>
<path d="M9 2.5 L11.8 6.8 L7.4 8.3 L5.6 5.6Z" fill="#eef030"/>
<path d="M9 2.5 L10.8 5.3 L8.2 6.2 L7 4.6Z" fill="#f8a028"/>
<circle cx="8.8" cy="3.4" r="1.3" fill="#e83828"/></svg>
<svg style="position:absolute;left:189px;top:118.5px" width="12" height="12" viewBox="0 0 12 12"><circle cx="6" cy="6" r="6" fill="#2a9ad8"/>
<path d="M3.8 4.5 Q3.8 2.2 6 2.2 Q8.3 2.2 8.3 4.3 Q8.3 5.5 6.8 6.2 Q6 6.6 6 7.8" fill="none" stroke="#fff" stroke-width="1.6"/>
<rect x="5.1" y="8.6" width="1.8" height="1.7" fill="#fff"/></svg>
<svg style="position:absolute;left:216.5px;top:118px" width="12" height="14" viewBox="0 0 12 14"><rect x="0.6" y="1" width="9.8" height="12" rx="1" fill="#dceefb" stroke="#74a8dc" stroke-width="1.1"/>
<path d="M2 1 H9" stroke="#c8a060" stroke-width="1"/>
<path d="M3 10.5 L8 4 L9 5 L4 11.5Z" fill="#f0a020"/>
<path d="M3 10.5 L2.8 12 L4 11.5Z" fill="#444"/></svg>
<svg style="position:absolute;left:237.5px;top:118px" width="13" height="14" viewBox="0 0 13 14"><path d="M1 3 Q3 2 9 3 L11 11 Q8 12.5 2 11.5Z" fill="#ece4d2" stroke="#b0a890" stroke-width="0.7"/>
<path d="M2 11.5 L4 12 L11.5 11.5 L11 10.5" fill="none" stroke="#888" stroke-width="0.8"/>
<circle cx="7" cy="2" r="1.6" fill="#d02828"/>
<path d="M7 2 L5.5 6" stroke="#901818" stroke-width="0.8"/></svg>
<svg style="position:absolute;left:258px;top:118.5px" width="12" height="13" viewBox="0 0 12 13"><rect x="5" y="0.5" width="6" height="11" fill="#e4e4e4" stroke="#8a8a8a" stroke-width="0.8"/>
<circle cx="5.5" cy="7.5" r="5" fill="#1c2a78"/>
<path d="M5.5 2.5 A5 5 0 0 1 10.5 7.5 L5.5 7.5Z" fill="#3a70d0"/>
<path d="M5.5 12.5 A5 5 0 0 1 0.5 7.5 L5.5 7.5Z" fill="#4060c0"/>
<circle cx="5.5" cy="7.5" r="1.8" fill="#f0f0f0"/>
<circle cx="5.5" cy="7.5" r="0.7" fill="#333"/></svg>
<svg style="position:absolute;left:274.5px;top:124px" width="7" height="4" viewBox="0 0 7 4"><path d="M0 0 H6.5 L3.25 3.2Z" fill="#5a5a5a"/></svg>
<svg style="position:absolute;left:294px;top:118px" width="11" height="14" viewBox="0 0 11 14"><rect x="0.6" y="1" width="9.8" height="12.2" fill="#fafafa" stroke="#9a9a9a" stroke-width="0.8"/>
<rect x="1.5" y="4.5" width="8" height="7.5" fill="#e6f4e8" stroke="#3a9a50" stroke-width="0.8"/>
<path d="M3.3 6 L7.7 10.8 M7.7 6 L3.3 10.8" stroke="#1e8a3a" stroke-width="1.3"/>
<circle cx="1.8" cy="1.8" r="1.4" fill="#e02020"/></svg>
<svg style="position:absolute;left:310px;top:124px" width="7" height="4" viewBox="0 0 7 4"><path d="M0 0 H6.5 L3.25 3.2Z" fill="#5a5a5a"/></svg>
<svg style="position:absolute;left:323.5px;top:118.5px" width="14" height="13" viewBox="0 0 14 13"><rect x="3.5" y="0.5" width="7" height="5" fill="#fff" stroke="#9a9a9a" stroke-width="0.8"/>
<path d="M0.5 5 H13.5 V11.5 H0.5Z" fill="#505458"/>
<path d="M1 5.5 H13 V7 H1Z" fill="#8a8e92"/>
<path d="M2 9 L9 9 L8 12.5 L1 12.5Z" fill="#38a8e0"/></svg>
<svg style="position:absolute;left:341px;top:124px" width="7" height="4" viewBox="0 0 7 4"><path d="M0 0 H6.5 L3.25 3.2Z" fill="#5a5a5a"/></svg>
<svg style="position:absolute;left:358.5px;top:118.5px" width="13" height="13" viewBox="0 0 13 13"><path d="M0 1 L3.5 1 L7 6.5 L3.5 12 L0 12 L3.5 6.5Z" fill="#2a8ad8"/>
<path d="M5.5 1 L9 1 L12.5 6.5 L9 12 L5.5 12 L9 6.5Z" fill="#f0b818"/></svg>
<svg style="position:absolute;left:375px;top:124px" width="7" height="4" viewBox="0 0 7 4"><path d="M0 0 H6.5 L3.25 3.2Z" fill="#5a5a5a"/></svg>
<div style="left:102.8px;top:688px;width:1px;height:15px;background:#a0a0a0"></div>
<div style="left:294.7px;top:688px;width:1px;height:15px;background:#a0a0a0"></div>
<div style="left:326.3px;top:688px;width:1px;height:15px;background:#a0a0a0"></div>
<div style="left:390.7px;top:688px;width:1px;height:15px;background:#a0a0a0"></div>
<div class="t" style="left:11.00px;top:690.95px;font-size:10px;color:#000;transform:scaleX(1.0020);transform-origin:0 0;">GmzaztuWrapper</div>
<div class="t" style="left:107.30px;top:690.95px;font-size:10px;color:#000;transform:scaleX(1.0496);transform-origin:0 0;">najemni(S)</div>
<div class="t" style="left:331.40px;top:690.95px;font-size:10px;color:#000;transform:scaleX(0.9923);transform-origin:0 0;">01.02.2021</div>
<svg style="position:absolute;left:976px;top:690px" width="12" height="12" viewBox="0 0 12 12"><path d="M11 3 L3 11 M11 6 L6 11 M11 9 L9 11" stroke="#a0a0a0" stroke-width="1"/></svg>
</body></html>
